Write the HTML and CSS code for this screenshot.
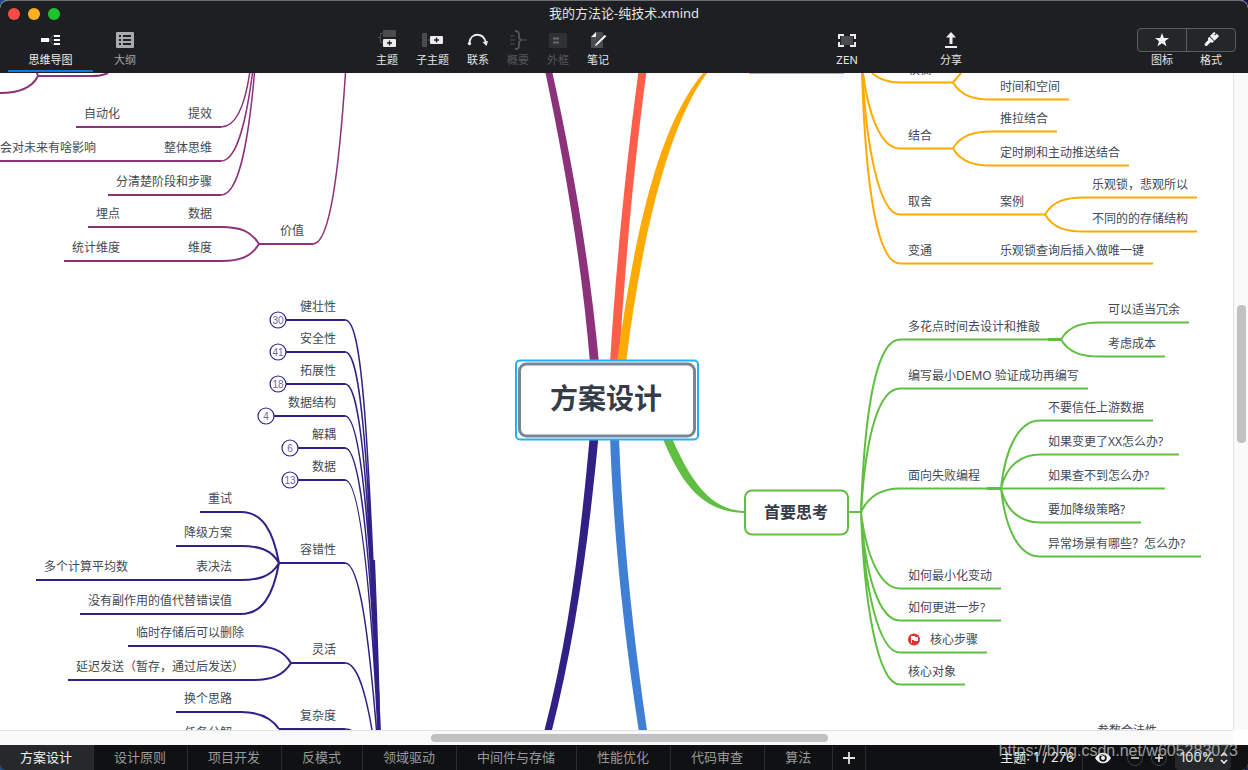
FILE: index.html
```html
<!DOCTYPE html>
<html lang="zh-CN">
<head>
<meta charset="utf-8">
<title>我的方法论-纯技术.xmind</title>
<link rel="stylesheet" href="styles.css">
</head>
<body>
<div class="window">
  <header class="header">
    <div class="titlebar">
      <div class="lights">
        <button class="light light-close" aria-label="关闭"></button>
        <button class="light light-min" aria-label="最小化"></button>
        <button class="light light-max" aria-label="缩放"></button>
      </div>
      <h1 class="title">我的方法论-纯技术.xmind</h1>
    </div>
    <div class="toolbar">
      <nav class="views">
        <button class="tool view view-active">
          <svg class="icon" width="20" height="20" viewBox="0 0 20 20"><path fill="none" stroke="#5b5d60" d="M13 5.500C9 5.500 11 10 7 10C11 10 9 14.500 13 14.500M8 10h5"/><path fill="#fff" d="M0 8h8v4H0zM13 5h6v2h-6zM13 9h6v2h-6zM13 13h6v2h-6z"/></svg>
          <span>思维导图</span>
        </button>
        <button class="tool view">
          <svg class="icon" width="20" height="20" viewBox="0 0 20 20"><rect x="1" y="2" width="18" height="16" rx="1" fill="#a9aaab"/><path fill="#1e1f22" d="M4 5h2v2H4zM8 5h8v2H8zM4 9h2v2H4zM8 9h8v2H8zM4 13h2v2H4zM8 13h8v2H8z"/></svg>
          <span>大纲</span>
        </button>
      </nav>
      <div class="tools">
        <button class="tool">
          <svg class="icon" width="20" height="20" viewBox="0 0 20 20"><path fill="none" stroke="#4b4c4f" d="M6 3.500H3.500V12.500H6M1 7.500h2"/><rect x="6" y="0" width="13" height="7" rx="1" fill="#4b4c4f"/><rect x="6" y="9" width="13" height="8" rx="1" fill="#ececec"/><path stroke="#1e1f22" stroke-width="1.300" d="M12.500 10.500v5M10 13h5"/></svg>
          <span>主题</span>
        </button>
        <button class="tool">
          <svg class="icon" width="22" height="20" viewBox="0 0 22 20"><rect x="0" y="3" width="5" height="14" rx="1" fill="#4b4c4f"/><path stroke="#4b4c4f" d="M5 10h3"/><rect x="8" y="6" width="13" height="8" rx="1" fill="#ececec"/><path stroke="#1e1f22" stroke-width="1.300" d="M14.500 7.500v5M12 10h5"/></svg>
          <span>子主题</span>
        </button>
        <button class="tool">
          <svg class="icon" width="22" height="20" viewBox="0 0 22 20"><path fill="none" stroke="#ececec" stroke-width="1.800" d="M2.500 12C4 2.500 16 2 19 12.500"/><circle cx="2.500" cy="13.500" r="1.700" fill="#ececec"/><path fill="#ececec" d="M15.500 12l5.500-1-1.500 5z"/></svg>
          <span>联系</span>
        </button>
        <button class="tool" disabled>
          <svg class="icon" width="20" height="20" viewBox="0 0 20 20"><path fill="#343538" d="M2 5h5v2H2zM2 9h5v2H2zM2 13h5v2H2z"/><path fill="none" stroke="#55565a" stroke-width="1.800" d="M7 1c4 0 4 1.500 4 4.500S11 9 13.500 10C11 11 11 12 11 14.500S11 19 7 19"/><path stroke="#3c3d40" stroke-width="1.500" d="M13 10h6"/></svg>
          <span>概要</span>
        </button>
        <button class="tool" disabled>
          <svg class="icon" width="20" height="20" viewBox="0 0 20 20"><rect x="1" y="3" width="18" height="15" rx="1" fill="#303134"/><path stroke="#6a6b6e" stroke-width="1.800" d="M5 8.500h6M5 12.500h6"/></svg>
          <span>外框</span>
        </button>
        <button class="tool">
          <svg class="icon" width="20" height="20" viewBox="0 0 20 20"><path fill="#4b4c4f" d="M8 2h6a1 1 0 0 1 1 1v14a1 1 0 0 1-1 1H4a1 1 0 0 1-1-1V7z"/><path fill="#ececec" d="M8 2v5H3z"/><path stroke="#1e1f22" stroke-width="3.500" d="M9 14l9-9"/><path stroke="#ececec" stroke-width="2.400" d="M9 14l8.500-8.500"/><path fill="#ececec" d="M7 16l1-3 2 2z"/></svg>
          <span>笔记</span>
        </button>
      </div>
      <div class="tools">
        <button class="tool">
          <svg class="icon" width="20" height="20" viewBox="0 0 20 20"><rect x="4" y="6" width="12" height="9" fill="#4b4c4f"/><path fill="none" stroke="#ececec" stroke-width="2" d="M2 9V5h5M13 5h5v4M18 12v4h-5M7 16H2v-4"/></svg>
          <span>ZEN</span>
        </button>
      </div>
      <div class="tools tools-share">
        <button class="tool">
          <svg class="icon" width="20" height="20" viewBox="0 0 20 20"><path fill="#ececec" d="M10 2l5 5.500h-3.500V14h-3V7.500H5zM4 16h12v2H4z"/></svg>
          <span>分享</span>
        </button>
        <div class="panels">
          <div class="panel">
            <button class="panel-btn" aria-labelledby="marker-label"><svg width="16" height="16" viewBox="0 0 16 16"><path fill="#f2f2f2" d="M8 1l1.900 5H15l-4 3.200 1.500 5.100L8 11.300l-4.500 3 1.500-5.100L1 6h5.100z"/></svg></button>
            <span id="marker-label">图标</span>
          </div>
          <div class="panel">
            <button class="panel-btn" aria-labelledby="format-label"><svg width="16" height="16" viewBox="0 0 16 16"><g transform="rotate(45 8 8)" fill="#f2f2f2"><path d="M4.500 0h2v2h1V-.5h3.500V6h-6.500z"/><path d="M4.500 6.800h6.500V9L9.300 10v4.500a1.600 1.600 0 0 1-3.200 0V10L4.500 9z"/></g></svg></button>
            <span id="format-label">格式</span>
          </div>
        </div>
      </div>
    </div>
  </header>

  <main class="workspace">
    <div class="canvas">
      <svg class="map" role="img" aria-label="方案设计">
        <g transform="translate(0 -73)">
          <!-- main branches -->
          <path fill="#8c327a" d="M545.500 73C565 165 582 265 590 363H599C590 265 573 165 552.500 73z"/>
          <path fill="#ff5f4a" d="M638.300 73C626 165 616 265 610 363H619C625 265 634 165 646.300 73z"/>
          <path fill="#ffaa00" d="M703 73C655 130 632 250 617 363H626C640 250 665 130 707 73zM749 72H844V74H749z"/>
          <path fill="#322087" d="M589.700 437C580 545 568 640 544.500 730H552C575 640 588 545 598.500 437z"/>
          <path fill="#4080d4" d="M610 437C614 545 625 640 638.700 730H647C634 640 623 545 619 437z"/>
          <path fill="#60be42" d="M662 437C680 480 700 512 744 513V511C710 510 690 480 671.500 437z"/>

          <g class="line purple">
            <path d="M37 73L38 76H92Q102 76 108 73M38 76C32 88 18 93 0 93"/>
            <path d="M76 127H221M0 161H221M108 195H221M88 227H221M64 261H221M259 244H313"/>
            <path class="fine" d="M221 127C238 127 246 98 249.700 73M221 161C237 161 246 122 252.500 73M221 195C240 195 249 135 254.500 73M313 244C330 244 339 170 345.500 73"/>
            <path d="M221 227C240 227 251 231 259 244C251 257 240 261 221 261"/>
          </g>

          <g class="line indigo">
            <path d="M286 320H345M286 352H345M286 384H345M274 416H345M298 448H345M298 480H345M279 563H345M291 663H345M279 729H345"/>
            <path class="fine" d="M345 320C362 320 368 420 380 730M345 352C361 352 368 450 380 730M345 384C360 384 368 470 379.500 730M345 416C359 416 369 500 379.500 730M345 448C359 448 369 530 379 730M345 480C358 480 369 560 378 730M345 563C360 563 369 640 376.500 730M345 663C358 663 366 695 372 730M345 729Q350 729 352 731"/>
            <path d="M200 512H241C262 512 273 530 279 563M176 546H241C258 546 271 549 279 563M36 580H241C258 580 271 577 279 563M80 614H241C262 614 273 596 279 563"/>
            <path d="M128 646H253C271 646 283 650 291 663M68 680H253C271 680 283 676 291 663M176 712H241C258 712 271 717 279 729"/>
            <path d="M374 560Q377 630 379.500 730"/>
            <g class="badge">
              <circle cx="278" cy="320" r="8"/><circle cx="278" cy="352" r="8"/><circle cx="278" cy="384" r="8"/><circle cx="266" cy="416" r="8"/><circle cx="290" cy="448" r="8"/><circle cx="290" cy="480" r="8"/>
            </g>
          </g>
          <g class="count">
            <text x="278" y="324">30</text><text x="278" y="356">41</text><text x="278" y="388">18</text><text x="266" y="420">4</text><text x="290" y="452">6</text><text x="290" y="484">13</text>
          </g>

          <g class="line orange">
            <path d="M872 73C880 80 888 82.500 900 82.500H953L961 73M953 82.500C961 96 974 99.500 992 99.500H1069"/>
            <path d="M863 73C868 112 880 148.500 900 148.500H953C961 135 974 131.500 992 131.500H1057M953 148.500C961 162 974 165.500 992 165.500H1129"/>
            <path d="M862.500 73C866 140 878 214.500 900 214.500H1045C1053 201 1066 197.500 1084 197.500H1197M1045 214.500C1053 228 1066 231.500 1084 231.500H1197"/>
            <path d="M862 73C865 165 874 263.500 900 263.500H1153"/>
          </g>

          <g class="line green">
            <path d="M849 512H861M861 512C865 400 878 339.500 900 339.500H1061C1069 326 1082 322.500 1100 322.500H1189M1061 339.500C1069 353 1082 356.500 1100 356.500H1165"/>
            <path d="M861 512C866 430 880 388.500 900 388.500H1088"/>
            <path d="M861 512C869 495 882 488.500 900 488.500H1165"/>
            <path d="M1001 488.500C1005 450 1018 420.500 1040 420.500H1153M1001 488.500C1006 466 1021 454.500 1040 454.500H1179M1001 488.500C1006 511 1021 522.500 1040 522.500H1141M1001 488.500C1005 527 1018 556.500 1040 556.500H1201"/>
            <path d="M861 512C866 555 880 588.500 900 588.500H1001M861 512C865 575 879 620.500 900 620.500H1001M861 512C864 585 878 652.500 900 652.500H987M861 512C864 600 877 684.500 900 684.500H965"/>
            <path class="joint" d="M987 488.500H1001M1048 339.500H1061"/>
            <rect x="745" y="490.500" width="103" height="44" rx="7" fill="#fff"/>
          </g>

          <rect class="halo" x="516" y="360.500" width="182" height="79" rx="4"/>
          <rect class="root-box" x="519.500" y="364" width="175" height="72" rx="7"/>
          <text class="root" x="606" y="409">方案设计</text>
          <text class="main-topic" x="796" y="518">首要思考</text>

          <g class="topic">
            <text x="84" y="118">自动化</text><text x="188" y="118">提效</text>
            <text x="0" y="152">会对未来有啥影响</text><text x="164" y="152">整体思维</text>
            <text x="116" y="186">分清楚阶段和步骤</text>
            <text x="96" y="218">埋点</text><text x="188" y="218">数据</text><text x="280" y="235">价值</text>
            <text x="72" y="252">统计维度</text><text x="188" y="252">维度</text>
            <text x="300" y="311">健壮性</text><text x="300" y="343">安全性</text><text x="300" y="375">拓展性</text>
            <text x="288" y="407">数据结构</text><text x="312" y="439">解耦</text><text x="312" y="471">数据</text>
            <text x="208" y="503">重试</text><text x="184" y="537">降级方案</text>
            <text x="44" y="571">多个计算平均数</text><text x="196" y="571">表决法</text>
            <text x="88" y="605">没有副作用的值代替错误值</text><text x="300" y="554">容错性</text>
            <text x="136" y="637">临时存储后可以删除</text><text x="76" y="671">延迟发送（暂存，通过后发送）</text><text x="312" y="654">灵活</text>
            <text x="184" y="703">换个思路</text><text x="300" y="720">复杂度</text><text x="184" y="737">任务分解</text>

            <text x="908" y="74">权衡</text><text x="1000" y="91">时间和空间</text>
            <text x="1000" y="123">推拉结合</text><text x="908" y="140">结合</text><text x="1000" y="157">定时刷和主动推送结合</text>
            <text x="1092" y="189">乐观锁，悲观所以</text><text x="908" y="206">取舍</text><text x="1000" y="206">案例</text><text x="1092" y="223">不同的的存储结构</text>
            <text x="908" y="255">变通</text><text x="1000" y="255">乐观锁查询后插入做唯一键</text>
            <text x="1108" y="314">可以适当冗余</text><text x="908" y="331">多花点时间去设计和推敲</text><text x="1108" y="348">考虑成本</text>
            <text x="908" y="380">编写最小DEMO 验证成功再编写</text>
            <text x="1048" y="412">不要信任上游数据</text><text x="1048" y="446">如果变更了XX怎么办?</text>
            <text x="908" y="480">面向失败编程</text><text x="1048" y="480">如果查不到怎么办?</text>
            <text x="1048" y="514">要加降级策略?</text><text x="1048" y="548">异常场景有哪些？怎么办?</text>
            <text x="908" y="580">如何最小化变动</text><text x="908" y="612">如何更进一步?</text>
            <text x="930" y="644">核心步骤</text><text x="908" y="676">核心对象</text>
            <text x="1097" y="735">参数合法性</text>
          </g>
          <circle cx="914" cy="639.500" r="6" fill="#e6312f"/>
          <path fill="#fff" d="M911 636h4v1h3v4h-4v-1h-2v3h-1z"/>
        </g>
      </svg>
    </div>
    <div class="vscroll"><div class="vthumb"></div></div>
    <div class="hscroll"><div class="hthumb"></div></div>
    <div class="corner"></div>
  </main>

  <footer class="footer">
    <nav class="sheets">
      <button class="sheet sheet-active">方案设计</button>
      <button class="sheet">设计原则</button>
      <button class="sheet">项目开发</button>
      <button class="sheet">反模式</button>
      <button class="sheet">领域驱动</button>
      <button class="sheet">中间件与存储</button>
      <button class="sheet">性能优化</button>
      <button class="sheet">代码审查</button>
      <button class="sheet">算法</button>
      <button class="sheet sheet-add" aria-label="新建画布"><svg width="12" height="12" viewBox="0 0 12 12"><path stroke="#e4e4e4" stroke-width="1.800" d="M6 0v12M0 6h12"/></svg></button>
    </nav>
    <div class="status">
      <span class="stat">主题: 1 / 276</span>
      <button class="eye" aria-label="显示"><svg width="16" height="12" viewBox="0 0 16 12"><path fill="#f4f4f4" fill-rule="evenodd" d="M0 6C4-1 12-1 16 6C12 13 4 13 0 6zM8 2.300a3.700 3.700 0 1 0 0 7.400a3.700 3.700 0 0 0 0-7.400z"/><circle cx="8" cy="6" r="2" fill="#f4f4f4"/></svg></button>
      <button class="step" aria-label="缩小"><svg width="16" height="16" viewBox="0 0 16 16"><circle cx="8" cy="8" r="7.500" fill="none" stroke="#3e4143"/><path stroke="#e4e4e4" stroke-width="1.500" d="M4 8h8"/></svg></button>
      <button class="step" aria-label="放大"><svg width="16" height="16" viewBox="0 0 16 16"><circle cx="8" cy="8" r="7.500" fill="none" stroke="#3e4143"/><path stroke="#e4e4e4" stroke-width="1.500" d="M4 8h8M8 4v8"/></svg></button>
      <div class="zoom">
        <select class="zoom-select" aria-label="缩放比例"><option>100%</option></select>
        <svg class="zoom-arrows" width="8" height="12" viewBox="0 0 8 12"><path fill="none" stroke="#f0f0f0" stroke-width="1.600" d="M1 4l3-3 3 3M1 8l3 3 3-3"/></svg>
      </div>
    </div>
  </footer>
  <div class="watermark">https://blog.csdn.net/w605283073</div>
</div>
</body>
</html>
```
FILE: styles.css
```css
* { box-sizing: border-box; }
html, body { height: 100%; }
body {
  margin: 0;
  overflow: hidden;
  background: linear-gradient(90deg, #24468c, #10144a);
  font-family: "Noto Sans", "Noto Sans CJK SC", sans-serif;
}
button {
  padding: 0;
  border: 0;
  background: none;
  color: inherit;
  font: inherit;
}
svg { display: block; }

.window {
  position: relative;
  display: flex;
  flex-direction: column;
  height: 100vh;
  overflow: hidden;
  border-radius: 8px 8px 6px 6px;
  background: #fff;
}

/* title bar and toolbar */
.header {
  flex: none;
  border-top: 1px solid #6c6f72;
  border-radius: 8px 8px 0 0;
  background: #1e1f22;
  color: #e4e4e4;
}
.titlebar {
  display: grid;
  grid-template-columns: 1fr auto 1fr;
  align-items: center;
  height: 24px;
}
.lights { display: flex; gap: 8px; padding: 1px 0 0 8px; }
.light { width: 12px; height: 12px; border-radius: 50%; }
.light-close { background: #ff4c44; }
.light-min { background: #ffb01f; }
.light-max { background: #1bc32f; }
.title {
  margin: 0;
  font-size: 13px;
  line-height: 24px;
  font-weight: 400;
}
.toolbar {
  display: grid;
  grid-template-columns: 376fr 460fr 104fr 308fr;
  height: 48px;
  font-family: Inter, "Noto Sans CJK SC", sans-serif;
}
.tools { display: flex; align-items: flex-start; gap: 18px; }
.tools-share { justify-content: space-between; padding-right: 12px; }
.tool {
  display: flex;
  flex-direction: column;
  align-items: center;
  padding-top: 5px;
  font-size: 11px;
  line-height: 20px;
  white-space: nowrap;
}
.tool .icon { margin: 0 -4px; }
.tool:disabled { color: #55565a; }
.views { display: flex; padding-left: 8px; }
.view {
  width: 64px;
  color: #a2a3a5;
  border-bottom: 2px solid transparent;
}
.view-active {
  width: 85px;
  height: 47px;
  color: #f0f0f0;
  border-bottom-color: #1178e0;
}
.panels { display: flex; padding-top: 3px; }
.panel {
  display: flex;
  flex-direction: column;
  align-items: center;
  font-size: 11px;
  line-height: 18px;
}
.panel + .panel { margin-left: -1px; }
.panel-btn {
  display: flex;
  justify-content: center;
  align-items: center;
  width: 50px;
  height: 24px;
  border: 1px solid #5c5f61;
  background: #24272a;
}
.panel:first-child .panel-btn { border-radius: 4px 0 0 4px; }
.panel:last-child .panel-btn { border-radius: 0 4px 4px 0; }
.panel-btn svg { flex: none; }
.panel span { padding-top: 0; line-height: 17px; }

/* canvas and scroll bars */
.workspace {
  flex: 1;
  display: grid;
  grid-template-columns: minmax(0, 1fr) 15px;
  grid-template-rows: minmax(0, 1fr) 15px;
}
.canvas { overflow: hidden; background: #fff; }
.map { width: 100%; height: 100%; }
.vscroll {
  padding: 232px 2px 0 3px;
  border-left: 1px solid #e2e2e2;
  background: #f9f9f9;
}
.vthumb { height: 138px; border-radius: 4px; background: #c1c1c1; }
.hscroll {
  display: grid;
  grid-template-columns: 431fr 397fr 405fr;
  padding-top: 3px;
  border-top: 1px solid #e2e2e2;
  background: #f9f9f9;
}
.hthumb { grid-column: 2; height: 8px; border-radius: 4px; background: #c1c1c1; }

.line { fill: none; stroke-width: 2; }
.line .fine { stroke-width: 1.5; }
.line .joint { stroke-width: 3; }
.purple { stroke: #8c327a; }
.indigo { stroke: #322087; }
.orange { stroke: #ffaa00; }
.green { stroke: #60be42; }
.badge { stroke-width: 1.2; }
.count {
  fill: #7165ad;
  font-family: "Liberation Sans", sans-serif;
  font-size: 10px;
  text-anchor: middle;
}
.topic { fill: #434a54; font-size: 12px; }
.halo { fill: #fff; stroke: #1fb1fa; stroke-width: 2; }
.root-box { fill: #fff; stroke: #778599; stroke-width: 3; }
.root {
  fill: #343c49;
  font-size: 28px;
  font-weight: 700;
  text-anchor: middle;
}
.main-topic {
  fill: #343c49;
  font-size: 16px;
  font-weight: 700;
  text-anchor: middle;
}

/* sheet tabs and status */
.footer {
  flex: none;
  display: flex;
  justify-content: space-between;
  height: 25px;
  background: #101113;
  color: #98999a;
  font-family: Inter, "Noto Sans CJK SC", sans-serif;
  font-size: 13px;
  line-height: 25px;
}
.sheets { display: flex; }
.sheet {
  padding: 0 21px 0 20px;
  border-right: 1px solid #2a2c2e;
  white-space: nowrap;
}
.sheet-active { background: #25292b; color: #f0f0f0; }
.sheet-add { padding: 0 10px; }
.status { display: flex; align-items: center; padding-right: 17px; color: #ececec; }
.stat { padding-right: 8px; border-right: 1px solid #2a2c2e; white-space: nowrap; }
.eye { margin: 0 16px 0 12px; }
.step { margin-right: 8px; }
.zoom {
  display: flex;
  align-items: center;
  height: 25px;
  padding: 0 3px 0 5px;
  border-radius: 4px;
  background: #24282a;
}
.zoom-select {
  appearance: none;
  width: 40px;
  padding: 0;
  border: 0;
  background: none;
  color: inherit;
  font: inherit;
}
.watermark {
  position: absolute;
  right: 10px;
  bottom: 9px;
  color: rgba(205, 205, 205, 0.75);
  font-family: "Liberation Sans", sans-serif;
  font-size: 16px;
  line-height: 20px;
  pointer-events: none;
}
```
